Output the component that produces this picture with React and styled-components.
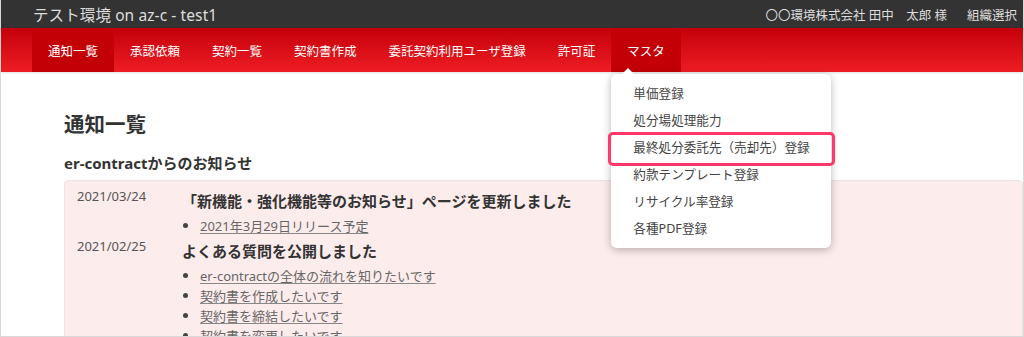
import React from "react";
import styled, { createGlobalStyle } from "styled-components";

const Global = createGlobalStyle`
  html, body { margin: 0; padding: 0; background: #fff; }
  body { font-family: "Noto Sans", "Noto Sans CJK JP", sans-serif; color: #333; }
  * { box-sizing: border-box; }
`;

const Frame = styled.div`
  position: relative;
  width: 1024px;
  height: 337px;
  overflow: hidden;
  border: 1px solid #d9d9d9;
  border-top: none;
  background: #fff;
`;

const TopBar = styled.header`
  height: 28px;
  background: #333;
  color: #ddd;
  display: flex;
  align-items: center;
  justify-content: space-between;
  padding: 0 6px 0 32px;
`;

const Brand = styled.div`
  font-size: 15.5px;
  letter-spacing: 0.1px;
`;

const UserArea = styled.div`
  display: flex;
  gap: 20px;
  font-size: 12.5px;
  color: #ddd;
`;

const NavBar = styled.nav`
  height: 44px;
  padding: 1px 31px 0;
  display: flex;
  background: linear-gradient(#c4000a, #ee1d24);
  box-shadow: 0 1px 2px rgba(0, 0, 0, 0.12);
  position: relative;
  z-index: 2;
`;

const NavItem = styled.div`
  position: relative;
  padding: 0 16px;
  display: flex;
  align-items: center;
  font-size: 12.5px;
  color: #fff;
  background: ${(p) => (p.$active ? "#c20006" : "transparent")};
`;

const Dropdown = styled.div`
  position: absolute;
  top: 45px;
  left: 0;
  width: 220px;
  padding: 6px 0;
  background: #fff;
  border-radius: 6px;
  box-shadow: 0 2px 8px rgba(0, 0, 0, 0.28);
  &::before {
    content: "";
    position: absolute;
    top: -6px;
    left: 11px;
    border-left: 6px solid transparent;
    border-right: 6px solid transparent;
    border-bottom: 6px solid #fff;
  }
`;

const MenuItem = styled.div`
  position: relative;
  height: 27px;
  line-height: 27px;
  padding-left: 22px;
  font-size: 12.6px;
  color: #444;
  ${(p) =>
    p.$marked &&
    `
    &::after {
      content: "";
      position: absolute;
      top: -2px;
      bottom: -5px;
      left: -3px;
      right: -4px;
      border: 3px solid #ff376b;
      border-radius: 5px;
    }
  `}
`;

const Main = styled.main`
  padding: 36px 0 0 63px;
`;

const PageTitle = styled.h1`
  margin: 0;
  font-size: 20.5px;
  line-height: 32px;
  font-weight: 700;
  color: #333;
`;

const SubTitle = styled.h2`
  margin: 11px 0 0;
  font-size: 15px;
  line-height: 24px;
  font-weight: 700;
  color: #333;
`;

const Panel = styled.section`
  margin-top: 5px;
  background: #fdecec;
  border: 1px solid #efe2e2;
  border-radius: 4px;
  padding: 6px 0 0 12px;
  min-height: 200px;
`;

const NoticeRow = styled.div`
  display: grid;
  grid-template-columns: 105px 1fr;
  margin-bottom: 2px;
`;

const DateCell = styled.div`
  font-size: 13px;
  line-height: 18px;
  color: #555;
`;

const NoticeTitle = styled.div`
  font-size: 15px;
  line-height: 28px;
  font-weight: 700;
  color: #333;
`;

const LinkList = styled.ul`
  margin: 0;
  padding: 0;
  list-style: none;
`;

const LinkItem = styled.li`
  display: flex;
  align-items: center;
  height: 20px;
  font-size: 13px;
  &::before {
    content: "";
    width: 5px;
    height: 5px;
    border-radius: 50%;
    background: #444;
    margin: 0 12px 0 1px;
  }
`;

const Link = styled.a`
  color: #666;
  text-decoration: underline;
  text-decoration-color: #888;
  text-underline-offset: 2px;
`;

const navItems = ["通知一覧", "承認依頼", "契約一覧", "契約書作成", "委託契約利用ユーザ登録", "許可証", "マスタ"];
const masterMenu = ["単価登録", "処分場処理能力", "最終処分委託先（売却先）登録", "約款テンプレート登録", "リサイクル率登録", "各種PDF登録"];

const notices = [
  {
    date: "2021/03/24",
    title: "「新機能・強化機能等のお知らせ」ページを更新しました",
    links: ["2021年3月29日リリース予定"],
  },
  {
    date: "2021/02/25",
    title: "よくある質問を公開しました",
    links: [
      "er-contractの全体の流れを知りたいです",
      "契約書を作成したいです",
      "契約書を締結したいです",
      "契約書を変更したいです",
    ],
  },
];

export default function App() {
  return (
    <Frame>
      <Global />
      <TopBar>
        <Brand>テスト環境 on az-c - test1</Brand>
        <UserArea>
          <span>〇〇環境株式会社 田中　太郎 様</span>
          <span>組織選択</span>
        </UserArea>
      </TopBar>
      <NavBar>
        {navItems.map((item, i) => (
          <NavItem key={item} $active={i === 0 || item === "マスタ"}>
            {item}
            {item === "マスタ" && (
              <Dropdown>
                {masterMenu.map((m, j) => (
                  <MenuItem key={m} $marked={j === 2}>
                    {m}
                  </MenuItem>
                ))}
              </Dropdown>
            )}
          </NavItem>
        ))}
      </NavBar>
      <Main>
        <PageTitle>通知一覧</PageTitle>
        <SubTitle>er-contractからのお知らせ</SubTitle>
        <Panel>
          {notices.map((n) => (
            <NoticeRow key={n.date}>
              <DateCell>{n.date}</DateCell>
              <div>
                <NoticeTitle>{n.title}</NoticeTitle>
                <LinkList>
                  {n.links.map((l) => (
                    <LinkItem key={l}>
                      <Link href="#">{l}</Link>
                    </LinkItem>
                  ))}
                </LinkList>
              </div>
            </NoticeRow>
          ))}
        </Panel>
      </Main>
    </Frame>
  );
}
